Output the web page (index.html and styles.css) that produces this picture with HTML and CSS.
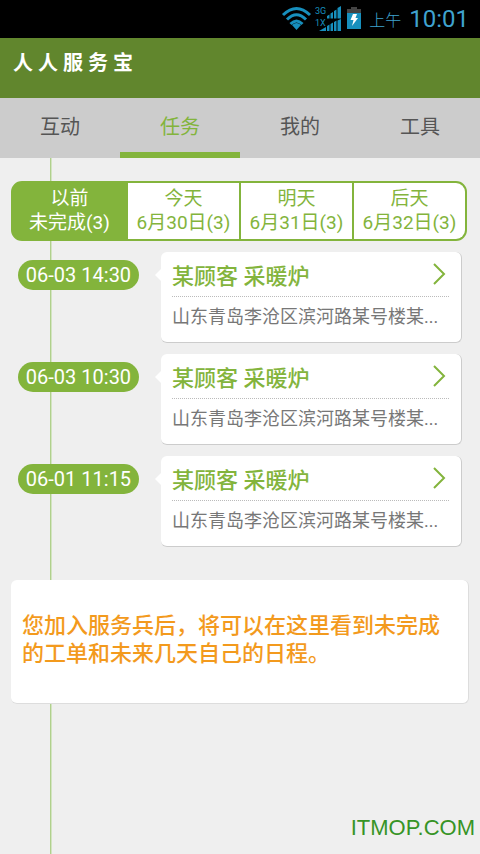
FILE: index.html
```html
<!DOCTYPE html>
<html lang="zh-CN">
<head>
<meta charset="utf-8">
<meta name="viewport" content="width=device-width, initial-scale=1">
<title>人人服务宝</title>
<link rel="stylesheet" href="styles.css">
</head>
<body>
<div class="status">
  <svg class="status-icons" width="80" height="30" viewBox="0 0 80 30" aria-hidden="true">
    <g fill="none" stroke="#178fbd" stroke-width="3">
      <path d="M2 11Q15.500-2 29 11"/>
      <path d="M6 15.500Q15.500 6 25 15.500"/>
      <path d="M9.500 20Q15.500 14 21.500 20"/>
    </g>
    <path fill="#178fbd" d="M11 21q4.500-4 9 0l-4.500 5z"/>
    <g fill="#178fbd">
      <path d="M46 12l2.500-1.500v4H46zM49.500 9.500L52 8v6.500h-2.500zM53 7l2.500-1.500v9H53zM56.500 4L60 2v12.500h-3.500z"/>
      <path d="M38 27l7-4v4zM46 22l2.500-1.500V27H46zM49.500 20L52 18.500V27h-2.500zM53 18l2.500-1.500V27H53zM56.500 16.500L60 15v12h-3.500z"/>
      <path d="M66 8h14v17H66z"/>
    </g>
    <path fill="#444" d="M66 9V5h4V3h6v2h4v4z"/>
    <path fill="#fff" d="M72 10h4l-1.500 4H77l-6 8 1.500-6H69.500z"/>
    <text class="signal" x="34" y="10">3G</text>
    <text class="signal" x="34" y="22">1X</text>
  </svg>
  <span class="period">上午</span>
  <time class="clock">10:01</time>
</div>
<header class="header"><h1 class="brand">人 人 服 务 宝</h1></header>
<nav class="tabs">
  <button class="tab" type="button">互动</button>
  <button class="tab tab-active" type="button" aria-current="page">任务</button>
  <button class="tab" type="button">我的</button>
  <button class="tab" type="button">工具</button>
</nav>
<main class="main">
  <div class="days">
    <button class="day day-active" type="button">以前<br>未完成(3)</button>
    <button class="day" type="button">今天<br>6月30日(3)</button>
    <button class="day" type="button">明天<br>6月31日(3)</button>
    <button class="day" type="button">后天<br>6月32日(3)</button>
  </div>
  <ul class="tasks">
    <li class="task">
      <time class="when">06-03 14:30</time>
      <a class="card" href="#">
        <span class="card-head"><span>某顾客 采暖炉</span><svg class="arrow" width="14" height="22" viewBox="0 0 14 22" aria-hidden="true"><path d="M2 1l10 10L2 21"/></svg></span>
        <span class="address">山东青岛李沧区滨河路某号楼某...</span>
      </a>
    </li>
    <li class="task">
      <time class="when">06-03 10:30</time>
      <a class="card" href="#">
        <span class="card-head"><span>某顾客 采暖炉</span><svg class="arrow" width="14" height="22" viewBox="0 0 14 22" aria-hidden="true"><path d="M2 1l10 10L2 21"/></svg></span>
        <span class="address">山东青岛李沧区滨河路某号楼某...</span>
      </a>
    </li>
    <li class="task">
      <time class="when">06-01 11:15</time>
      <a class="card" href="#">
        <span class="card-head"><span>某顾客 采暖炉</span><svg class="arrow" width="14" height="22" viewBox="0 0 14 22" aria-hidden="true"><path d="M2 1l10 10L2 21"/></svg></span>
        <span class="address">山东青岛李沧区滨河路某号楼某...</span>
      </a>
    </li>
  </ul>
  <p class="notice">您加入服务兵后，将可以在这里看到未完成的工单和未来几天自己的日程。</p>
  <footer class="site">ITMOP.COM</footer>
</main>
</body>
</html>
```
FILE: styles.css
```css
* { box-sizing: border-box; }

body {
  margin: 0;
  min-height: 100vh;
  display: flex;
  flex-direction: column;
  background: #efefef;
  font-family: Roboto, "Noto Sans CJK SC", sans-serif;
}

button {
  margin: 0;
  padding: 0;
  border: 0;
  background: none;
  font: inherit;
  color: inherit;
}

.status {
  height: 38px;
  padding: 0 11px 0 0;
  display: flex;
  align-items: center;
  justify-content: flex-end;
  gap: 8px;
  background: #000;
  color: #3fa3cf;
}
.signal { font-size: 9px; fill: #178fbd; }
.period { font-size: 16px; font-weight: 300; }
.clock { font-size: 24px; }

.header {
  height: 60px;
  padding: 11px 13px;
  background: #61862d;
}
.brand {
  margin: 0;
  font-family: "Liberation Serif", "Noto Sans CJK SC", serif;
  font-size: 20px;
  line-height: 28px;
  font-weight: 700;
  color: #fff;
}

.tabs {
  display: grid;
  grid-template-columns: repeat(4, 1fr);
  height: 60px;
  background: #ccc;
  color: #555;
  font-size: 20px;
}
.tab { border-bottom: 6px solid transparent; }
.tab-active { color: #83b43c; border-bottom-color: #83b43c; }

.main {
  flex: 1;
  display: flex;
  flex-direction: column;
  padding-top: 23px;
  background: linear-gradient(90deg, #b0d08c 50%, #d3e4c2 50%) 50px 0 / 2px 100% no-repeat;
}

.days {
  display: grid;
  grid-template-columns: repeat(4, 1fr);
  height: 60px;
  margin: 0 13px 0 11px;
  border: 2px solid #83b43c;
  border-radius: 11px;
  background: #83b43c;
  color: #83b43c;
  font-size: 19px;
  line-height: 24px;
}
.day { background: #fff; }
.day + .day { border-left: 2px solid #83b43c; }
.day:last-child { border-radius: 0 9px 9px 0; }
.day-active { background: none; color: #fff; }

.tasks {
  list-style: none;
  margin: 11px 18px 0;
  padding: 0;
  display: flex;
  flex-direction: column;
  gap: 11px;
}
.task {
  display: flex;
  align-items: flex-start;
  gap: 22px;
}
.when {
  flex: none;
  width: 121px;
  margin-top: 8px;
  border-radius: 15px;
  background: #83b43c;
  color: #fff;
  font-size: 20px;
  line-height: 30px;
  text-align: center;
}
.card {
  position: relative;
  flex: 1;
  min-width: 0;
  padding: 0 12px 6px 11px;
  border: solid #ccc;
  border-width: 0 1px 1px 0;
  border-radius: 6px;
  background: #fff;
  color: #777;
  text-decoration: none;
}
.card::before {
  content: "";
  position: absolute;
  left: -6px;
  top: 17px;
  border: 6px solid transparent;
  border-left: 0;
  border-right-color: #fff;
}
.card-head {
  display: flex;
  align-items: center;
  justify-content: space-between;
  height: 45px;
  padding-right: 3px;
  border-bottom: 1px dotted #bbb;
  color: #83b43c;
  font-size: 22px;
  font-weight: 500;
}
.arrow { fill: none; stroke: #83b43c; stroke-width: 2; }
.address {
  display: block;
  font-size: 18px;
  line-height: 40px;
  white-space: nowrap;
}
.card { padding-bottom: 5px; }

.notice {
  margin: 33px 11px 0;
  padding: 32px 8px 35px 11px;
  border: solid #ddd;
  border-width: 0 1px 1px 0;
  border-radius: 6px;
  background: #fff;
  color: #f39a1d;
  font-size: 22px;
  font-weight: 500;
  line-height: 28px;
}

.site {
  margin-top: auto;
  padding: 0 5px 12px;
  font-family: "Liberation Sans", sans-serif;
  font-size: 22px;
  line-height: 28px;
  text-align: right;
  color: #379426;
}
```
